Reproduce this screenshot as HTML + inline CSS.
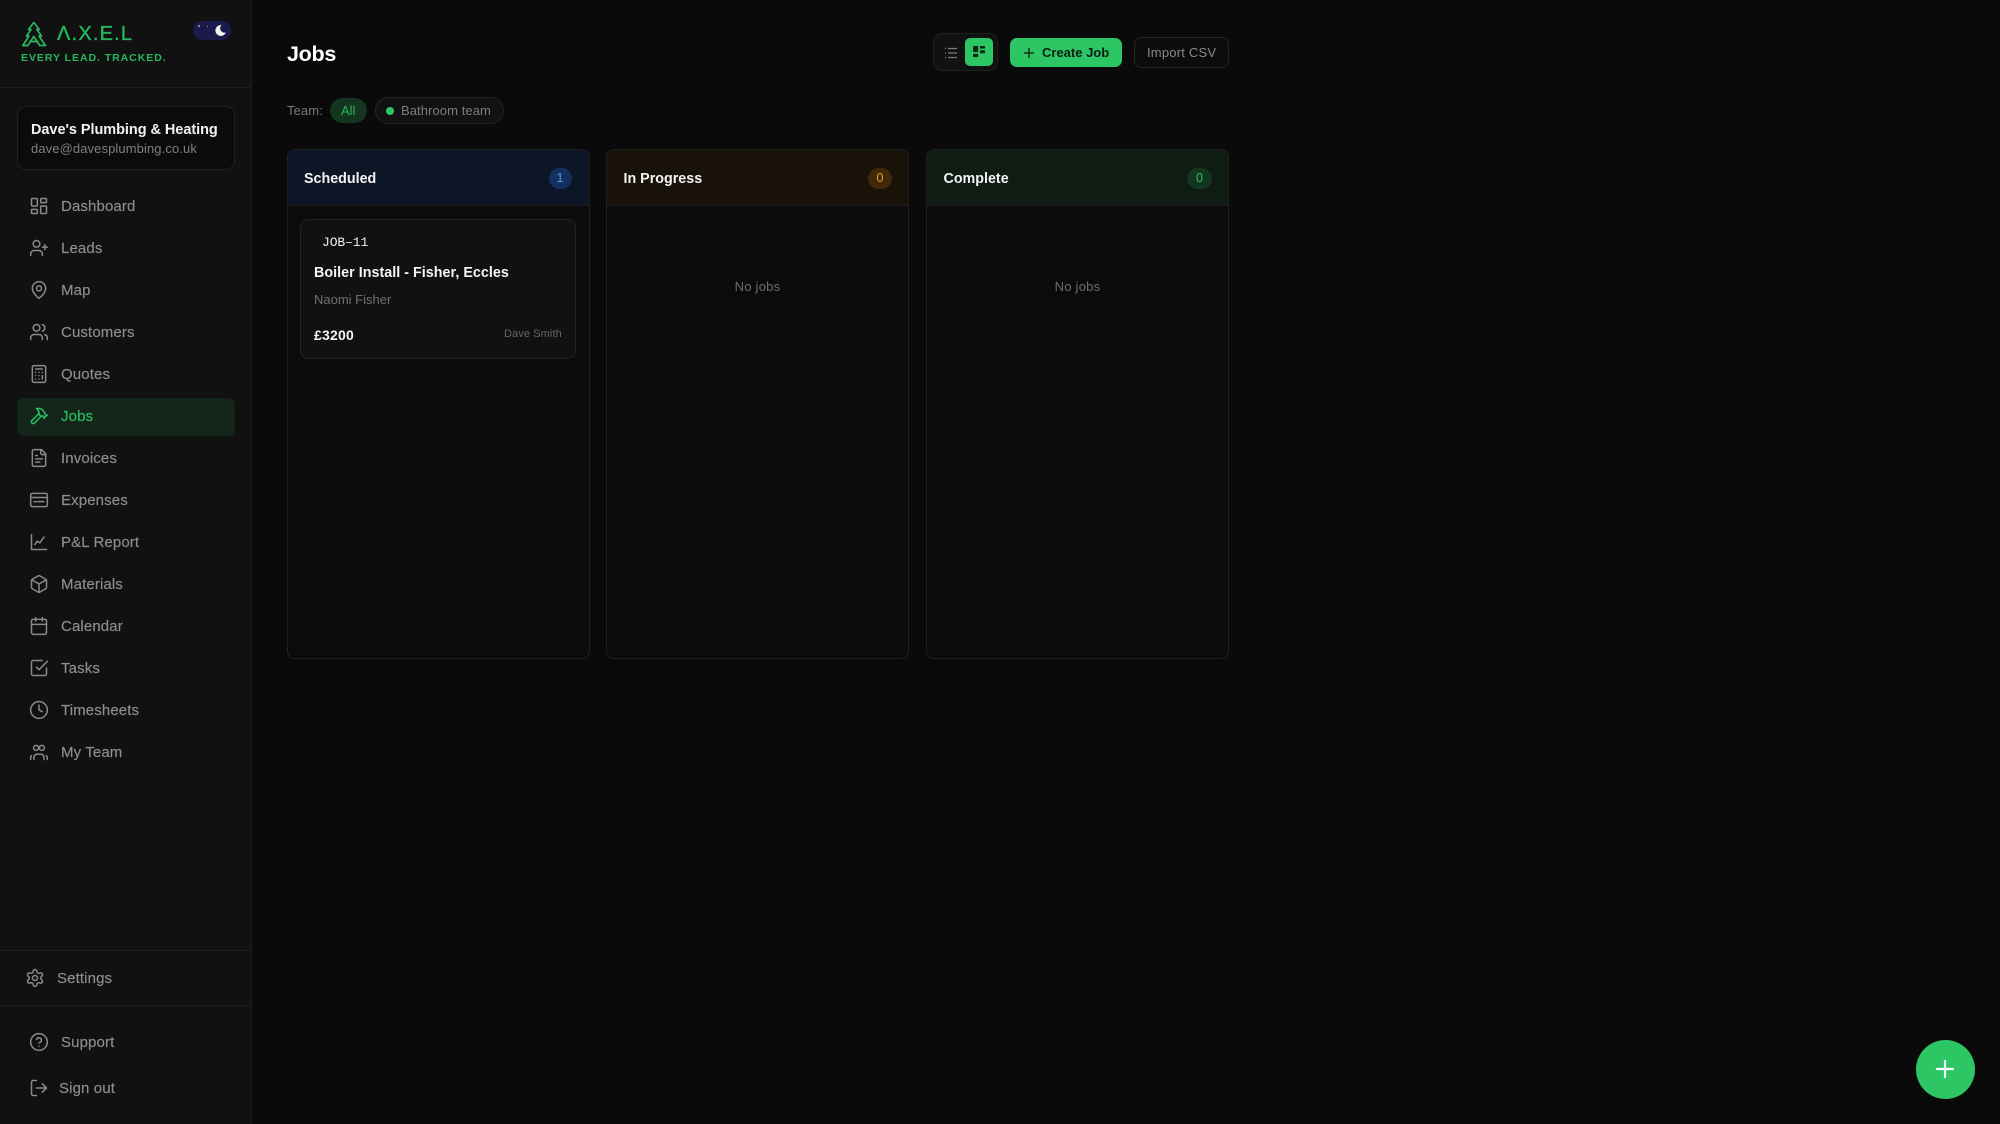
<!DOCTYPE html>
<html lang="en"><head><meta charset="utf-8"><title>Jobs</title>
<style>
*{box-sizing:border-box;margin:0;padding:0}
html,body{width:2000px;height:1124px;overflow:hidden;background:#0a0a0a;font-family:"Liberation Sans",sans-serif}
.a{position:absolute}
.t{position:absolute;white-space:nowrap;line-height:20px;height:20px}
.side{position:absolute;left:0;top:0;width:252px;height:1124px;background:#111112;border-right:1px solid #1e1e1f}
.hr{position:absolute;left:0;width:252px;height:1px;background:#1e1e1f}
.nav{font-size:15px;color:#8e8e8e;left:61px;letter-spacing:.12px;-webkit-text-stroke:.15px #8e8e8e}
svg.i{position:absolute;width:20px;height:20px;left:29px;fill:none;stroke:#8a8a8a;stroke-width:1.8;stroke-linecap:round;stroke-linejoin:round}
.col{position:absolute;top:149px;width:303px;height:510px;background:#0b0b0c;border:1px solid #202021;border-radius:8px;overflow:hidden}
.colh{position:absolute;left:0;top:0;right:0;height:56px;border-bottom:1px solid #1c1c1d}
.colt{position:absolute;left:16.500px;top:19px;font-size:14.300px;font-weight:bold;color:#f4f4f4;line-height:20px;white-space:nowrap}
.badge{position:absolute;top:18px;height:21px;border-radius:11px;font-size:12.500px;line-height:21px;text-align:center}
.empty{position:absolute;left:0;right:0;top:127px;text-align:center;font-size:13px;color:#6e6e6e;letter-spacing:.25px;line-height:20px}
</style></head><body>
<div class="side"></div>
<svg class="a" style="left:21px;top:21px" width="27" height="27" viewBox="0 0 27 27" fill="none" stroke="#25b85c" stroke-width="1.700" stroke-linejoin="round" stroke-linecap="round"><path d="M12.800 1.500 7.500 8.500H10L5.500 15H8L1.800 24.500H6.800L12.800 15.500 18.800 24.500H24.500L18 15H20.500L15.800 8.500H18.300Z"/><path d="M9.500 20.500H16.500"/></svg>
<div class="t" style="left:57px;top:23px;font-size:20px;line-height:22px;height:22px;color:#25b85c;letter-spacing:1.200px;-webkit-text-stroke:.35px #25b85c">&#923;.X.E.L</div>
<div class="t" style="left:21px;top:48px;font-size:10.500px;font-weight:bold;color:#25b85c;letter-spacing:.95px">EVERY LEAD. TRACKED.</div>
<div class="a" style="left:193px;top:21px;width:38px;height:19px;border-radius:10px;background:#1a1a4d"></div>
<div class="a" style="left:198px;top:25px;width:2px;height:2px;background:#aab;border-radius:50%"></div>
<div class="a" style="left:207px;top:26px;width:1px;height:1px;background:#99a"></div>
<svg class="a" style="left:214px;top:24px" width="13" height="13" viewBox="0 0 13 13"><path d="M7.500 1A5.500 5.500 0 1 0 12 8.500 4.500 4.500 0 0 1 7.500 1Z" fill="#f2f2ea"/></svg>
<div class="hr" style="top:87px"></div>
<div class="a" style="left:17px;top:106px;width:218px;height:64px;background:#0b0b0c;border:1px solid #212122;border-radius:9px"></div>
<div class="t" style="left:31px;top:120px;font-size:14.500px;font-weight:bold;color:#f3f3f3;letter-spacing:-.05px">Dave's Plumbing &amp; Heating</div>
<div class="t" style="left:31px;top:139px;font-size:13px;color:#7f7f7f;letter-spacing:.1px">dave@davesplumbing.co.uk</div>

<div class="a" style="left:17px;top:398px;width:218px;height:38px;background:#14261a;border-radius:7px"></div>

<div class="t nav" style="top:197px">Dashboard</div>
<svg class="i" style="top:196px" viewBox="0 0 24 24"><rect x="3" y="3" width="7" height="9" rx="1"/><rect x="14" y="3" width="7" height="5" rx="1"/><rect x="14" y="12" width="7" height="9" rx="1"/><rect x="3" y="16" width="7" height="5" rx="1"/></svg>
<div class="t nav" style="top:239px">Leads</div>
<svg class="i" style="top:238px" viewBox="0 0 24 24"><path d="M16 21v-2a4 4 0 0 0-4-4H6a4 4 0 0 0-4 4v2"/><circle cx="9" cy="7" r="4"/><path d="M19 8v6M22 11h-6"/></svg>
<div class="t nav" style="top:281px">Map</div>
<svg class="i" style="top:280px" viewBox="0 0 24 24"><path d="M20 10c0 6-8 12-8 12s-8-6-8-12a8 8 0 0 1 16 0Z"/><circle cx="12" cy="10" r="3"/></svg>
<div class="t nav" style="top:323px">Customers</div>
<svg class="i" style="top:322px" viewBox="0 0 24 24"><path d="M16 21v-2a4 4 0 0 0-4-4H6a4 4 0 0 0-4 4v2"/><circle cx="9" cy="7" r="4"/><path d="M22 21v-2a4 4 0 0 0-3-3.870M16 3.130a4 4 0 0 1 0 7.750"/></svg>
<div class="t nav" style="top:365px">Quotes</div>
<svg class="i" style="top:364px" viewBox="0 0 24 24"><rect x="4" y="2" width="16" height="20" rx="2"/><path d="M8 6h8M16 14v4M16 10h.01M12 10h.01M8 10h.01M12 14h.01M8 14h.01M12 18h.01M8 18h.01"/></svg>
<div class="t nav" style="top:407px;color:#28c060;-webkit-text-stroke:.15px #28c060">Jobs</div>
<svg class="i" style="top:406px;stroke:#28c060" viewBox="0 0 24 24"><path d="m15 12-8.500 8.500c-.83.83-2.170.83-3 0a2.120 2.120 0 0 1 0-3L12 9"/><path d="M17.640 15 22 10.640"/><path d="m20.910 11.700-1.250-1.250c-.6-.6-.93-1.400-.93-2.250v-.86L16.010 4.600a5.560 5.560 0 0 0-3.940-1.640H9l.92.82A6.180 6.180 0 0 1 12 8.400v1.560l2 2h2.470l2.260 1.910"/></svg>
<div class="t nav" style="top:449px">Invoices</div>
<svg class="i" style="top:448px" viewBox="0 0 24 24"><path d="M15 2H6a2 2 0 0 0-2 2v16a2 2 0 0 0 2 2h12a2 2 0 0 0 2-2V7Z"/><path d="M14 2v4a2 2 0 0 0 2 2h4M10 9H8M16 13H8M13 17H8"/></svg>
<div class="t nav" style="top:491px">Expenses</div>
<svg class="i" style="top:490px" viewBox="0 0 24 24"><rect x="2" y="4" width="20" height="16" rx="2"/><path d="M2 9h20M6 14h3M11 14h7"/></svg>
<div class="t nav" style="top:533px">P&amp;L Report</div>
<svg class="i" style="top:532px" viewBox="0 0 24 24"><path d="M3 3v18h18M7 15l3-4 3 2 5-7"/></svg>
<div class="t nav" style="top:575px">Materials</div>
<svg class="i" style="top:574px" viewBox="0 0 24 24"><path d="M21 8a2 2 0 0 0-1-1.730l-7-4a2 2 0 0 0-2 0l-7 4A2 2 0 0 0 3 8v8a2 2 0 0 0 1 1.730l7 4a2 2 0 0 0 2 0l7-4A2 2 0 0 0 21 16Z"/><path d="m3.300 7 8.700 5 8.700-5M12 22V12"/></svg>
<div class="t nav" style="top:617px">Calendar</div>
<svg class="i" style="top:616px" viewBox="0 0 24 24"><rect x="3" y="4" width="18" height="18" rx="2"/><path d="M16 2v4M8 2v4M3 10h18"/></svg>
<div class="t nav" style="top:659px">Tasks</div>
<svg class="i" style="top:658px" viewBox="0 0 24 24"><path d="m9 11 3 3L22 4"/><path d="M21 12v7a2 2 0 0 1-2 2H5a2 2 0 0 1-2-2V5a2 2 0 0 1 2-2h11"/></svg>
<div class="t nav" style="top:701px">Timesheets</div>
<svg class="i" style="top:700px" viewBox="0 0 24 24"><circle cx="12" cy="12" r="10"/><path d="M12 6v6l4 2"/></svg>
<div class="t nav" style="top:743px">My Team</div>
<svg class="i" style="top:742px" viewBox="0 0 24 24"><circle cx="8.500" cy="7" r="3"/><circle cx="15.500" cy="7" r="3"/><path d="M6 21v-2.500a4 4 0 0 1 4-4h4a4 4 0 0 1 4 4V21M2 21v-2a4 4 0 0 1 1-2.600M22 21v-2a4 4 0 0 0-1-2.600"/></svg>

<div class="hr" style="top:950px"></div>
<div class="t nav" style="top:969px;left:57px">Settings</div>
<svg class="i" style="top:968px;left:25px" viewBox="0 0 24 24"><path d="M12.220 2h-.44a2 2 0 0 0-2 2v.18a2 2 0 0 1-1 1.730l-.43.25a2 2 0 0 1-2 0l-.15-.08a2 2 0 0 0-2.730.73l-.22.38a2 2 0 0 0 .73 2.730l.15.1a2 2 0 0 1 1 1.720v.51a2 2 0 0 1-1 1.740l-.15.09a2 2 0 0 0-.73 2.730l.22.38a2 2 0 0 0 2.730.73l.15-.08a2 2 0 0 1 2 0l.43.25a2 2 0 0 1 1 1.730V20a2 2 0 0 0 2 2h.44a2 2 0 0 0 2-2v-.18a2 2 0 0 1 1-1.730l.43-.25a2 2 0 0 1 2 0l.15.08a2 2 0 0 0 2.730-.73l.22-.39a2 2 0 0 0-.73-2.730l-.15-.08a2 2 0 0 1-1-1.740v-.5a2 2 0 0 1 1-1.740l.15-.09a2 2 0 0 0 .73-2.730l-.22-.38a2 2 0 0 0-2.730-.73l-.15.08a2 2 0 0 1-2 0l-.43-.25a2 2 0 0 1-1-1.730V4a2 2 0 0 0-2-2z"/><circle cx="12" cy="12" r="3"/></svg>
<div class="hr" style="top:1005px"></div>
<div class="t nav" style="top:1033px">Support</div>
<svg class="i" style="top:1032px" viewBox="0 0 24 24"><circle cx="12" cy="12" r="10"/><path d="M9.090 9a3 3 0 0 1 5.830 1c0 2-3 3-3 3M12 17h.01"/></svg>
<div class="t nav" style="top:1079px;left:59px">Sign out</div>
<svg class="i" style="top:1078px" viewBox="0 0 24 24"><path d="M9 21H5a2 2 0 0 1-2-2V5a2 2 0 0 1 2-2h4M16 17l5-5-5-5M21 12H9"/></svg>

<div class="t" style="left:287px;top:41px;font-size:21.500px;line-height:26px;height:26px;font-weight:bold;color:#fff;letter-spacing:-.3px">Jobs</div>

<div class="a" style="left:933px;top:33px;width:65px;height:38px;background:#111112;border:1px solid #212122;border-radius:9px"></div>
<svg class="a" style="left:944px;top:46px" width="14" height="14" viewBox="0 0 14 14" fill="none" stroke="#7c7c7c" stroke-width="1.200"><path d="M4 2.500h9M4 7h9M4 11.500h9M1 2.500h1M1 7h1M1 11.500h1"/></svg>
<div class="a" style="left:965px;top:38px;width:28px;height:28px;background:#2cc665;border-radius:5px"></div>
<svg class="a" style="left:973px;top:46px" width="13" height="12" viewBox="0 0 15 14" fill="#0f2417"><rect x="0" y="0" width="6" height="7" rx="1"/><rect x="8" y="0" width="6" height="3" rx="1"/><rect x="8" y="5" width="6" height="3.500" rx="1"/><rect x="0" y="9" width="6" height="4" rx="1"/></svg>
<div class="a" style="left:1010px;top:38px;width:112px;height:29px;background:#2cc665;border-radius:7px"></div>
<svg class="a" style="left:1022px;top:46px" width="14" height="14" viewBox="0 0 14 14" fill="none" stroke="#0c1d12" stroke-width="1.300" stroke-linecap="round"><path d="M7 2.500v9M2.500 7h9"/></svg>
<div class="t" style="left:1042px;top:43px;font-size:13px;font-weight:bold;color:#0c1d12">Create Job</div>
<div class="a" style="left:1134px;top:37px;width:95px;height:31px;background:#0c0c0d;border:1px solid #242425;border-radius:7px"></div>
<div class="t" style="left:1147px;top:43px;font-size:13px;color:#8a8a8a;letter-spacing:.2px">Import CSV</div>

<div class="t" style="left:287px;top:101px;font-size:13px;color:#7a7a7a;letter-spacing:.1px">Team:</div>
<div class="a" style="left:330px;top:98px;width:37px;height:25px;background:#14351f;border-radius:13px"></div>
<div class="t" style="left:341px;top:101px;font-size:13px;color:#25b85c">All</div>
<div class="a" style="left:375px;top:97px;width:129px;height:27px;background:#111112;border:1px solid #232324;border-radius:14px"></div>
<div class="a" style="left:386px;top:107px;width:8px;height:8px;background:#2cc665;border-radius:50%"></div>
<div class="t" style="left:401px;top:101px;font-size:13px;color:#7f7f7f;letter-spacing:.08px">Bathroom team</div>

<div class="col" style="left:286.500px"><div class="colh" style="background:#0c1626"></div><div class="colt">Scheduled</div><div class="badge" style="left:261px;width:23px;background:#14305e;color:#5b93e0">1</div></div>
<div class="col" style="left:606px"><div class="colh" style="background:#191208"></div><div class="colt">In Progress</div><div class="badge" style="left:261px;width:24px;background:#3e2a08;color:#e2a32b">0</div><div class="empty">No jobs</div></div>
<div class="col" style="left:926px"><div class="colh" style="background:#0e1c13"></div><div class="colt">Complete</div><div class="badge" style="left:260px;width:25px;background:#123620;color:#28c060">0</div><div class="empty">No jobs</div></div>

<div class="a" style="left:300px;top:219px;width:276px;height:140px;background:#111112;border:1px solid #222223;border-radius:8px"></div>
<div class="t" style="left:322px;top:233px;font-family:'Liberation Mono',monospace;font-size:13px;color:#f0f0f0;letter-spacing:-.1px">JOB&ndash;11</div>
<div class="t" style="left:314px;top:263px;font-size:14.300px;font-weight:bold;color:#f5f5f5;letter-spacing:.03px">Boiler Install - Fisher, Eccles</div>
<div class="t" style="left:314px;top:290px;font-size:13px;color:#6f6f6f">Naomi Fisher</div>
<div class="t" style="left:314px;top:325px;font-size:14px;font-weight:bold;color:#f5f5f5;letter-spacing:.2px">£3200</div>
<div class="t" style="left:504px;top:324px;font-size:11px;color:#666;letter-spacing:.1px">Dave Smith</div>

<div class="a" style="left:1915.500px;top:1040px;width:59px;height:59px;background:#2cc665;border-radius:50%"></div>
<svg class="a" style="left:1935px;top:1059px" width="20" height="20" viewBox="0 0 20 20" fill="none" stroke="#fff" stroke-width="2.200" stroke-linecap="round"><path d="M10 2v16M2 10h16"/></svg>
</body></html>
